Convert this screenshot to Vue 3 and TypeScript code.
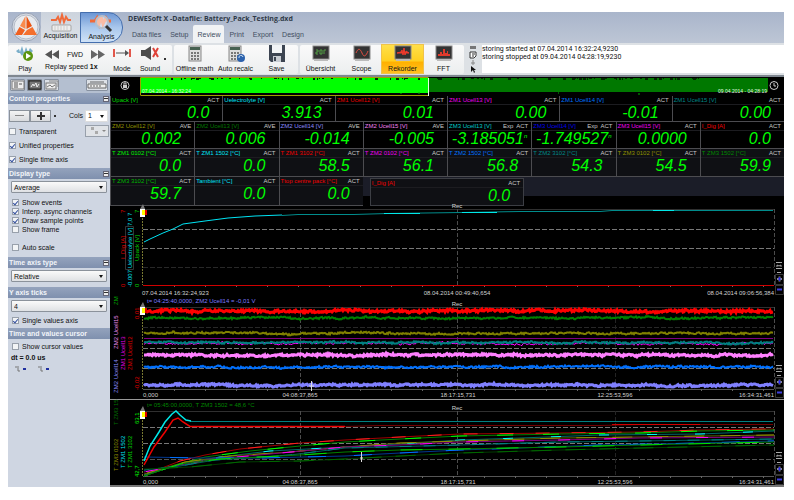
<script setup lang="ts">
import { ref } from 'vue'

interface Meter { name: string; unit: string; mode: string; value: string; color: string; exp?: string }

const m = (name: string, unit: string, mode: string, value: string, color: string, exp?: string): Meter =>
  ({ name, unit, mode, value, color, exp })

const rowA: Meter[] = [
  m('Upack', 'V', 'ACT', '0.0', '#00d800'),
  m('Uelectrolyte', 'V', 'ACT', '3.913', '#00e4f4'),
  m('ZM1 Ucell12', 'V', 'ACT', '0.01', '#e80000'),
  m('ZM1 Ucell13', 'V', 'ACT', '0.00', '#f000f0'),
  m('ZM1 Ucell14', 'V', 'ACT', '-0.01', '#0074ff'),
  m('ZM1 Ucell15', 'V', 'ACT', '0.00', '#008888'),
]
const rowB: Meter[] = [
  m('ZM2 Ucell12', 'V', 'AVE', '0.002', '#909000'),
  m('ZM2 Ucell13', 'V', 'AVE', '0.006', '#007800'),
  m('ZM2 Ucell14', 'V', 'AVE', '-0.014', '#8c8cff'),
  m('ZM2 Ucell15', 'V', 'AVE', '-0.005', '#f080f0'),
  m('ZM3 Ucell13', 'V', 'ACT', '-3.185051', '#00c8c8', 'n'),
  m('ZM3 Ucell14', 'V', 'ACT', '-1.749527', '#0000e8', 'n'),
  m('ZM3 Ucell15', 'V', 'ACT', '0.0000', '#f000f0'),
  m('I_Dig', 'A', 'ACT', '0.0', '#f00000'),
]
const rowC: Meter[] = [
  m('T ZM1 0102', '°C', 'ACT', '0.0', '#00f000'),
  m('T ZM1 1502', '°C', 'ACT', '0.0', '#00e4f4'),
  m('T ZM1 3102', '°C', 'ACT', '58.5', '#f00000'),
  m('T ZM2 0102', '°C', 'ACT', '56.1', '#f000f0'),
  m('T ZM2 1502', '°C', 'ACT', '56.8', '#0074ff'),
  m('T ZM2 3102', '°C', 'ACT', '54.3', '#008888'),
  m('T ZM3 0102', '°C', 'ACT', '54.5', '#909000'),
  m('T ZM3 1502', '°C', 'ACT', '59.9', '#008800'),
]
const rowD: Meter[] = [
  m('T ZM3 3102', '°C', 'ACT', '59.7', '#00b800'),
  m('Tambient', '°C', 'ACT', '0.0', '#00e4f4'),
  m('Ttop centre pack', '°C', 'ACT', '0.0', '#f00000'),
  m('I_Dig', 'A', 'ACT', '0.0', '#f00000'),
]
const rows = [
  { id: 'a', cells: rowA },
  { id: 'b', cells: rowB },
  { id: 'c', cells: rowC },
  { id: 'd', cells: rowD },
]

const menu = ['Data files', 'Setup', 'Review', 'Print', 'Export', 'Design']
const displays = ['Übersicht', 'Scope', 'Rekorder', 'FFT']

const options = ref([
  { label: 'Show events', on: true },
  { label: 'Interp. async channels', on: true },
  { label: 'Draw sample points', on: true },
  { label: 'Show frame', on: false },
])
const transparent = ref(false)
const unified = ref(true)
const singleTime = ref(true)
const autoScale = ref(false)
const singleValues = ref(true)
const cursorValues = ref(false)

function rng(seed: number) {
  let s = seed
  return () => {
    s = (s * 1103515245 + 12345) % 2147483648
    return s / 2147483648
  }
}

/* Noisy horizontal signal around y */
function noise(y: number, amp: number, seed: number): string {
  const r = rng(seed)
  let d = ''
  let drift = 0
  for (let x = 144; x <= 773; x++) {
    drift = drift * 0.92 + (r() - 0.5) * 0.7
    const v = y + drift + (r() - 0.5) * amp
    d += (d ? 'L' : 'M') + x + ' ' + v.toFixed(1)
  }
  return d
}

const traces = [
  { d: noise(311, 2.4, 11), c: '#ff0000', w: 3 },
  { d: noise(318, 1.6, 25), c: '#008000', w: 2 },
  { d: noise(333, 1.6, 37), c: '#808000', w: 2 },
  { d: noise(343.5, 2, 41), c: '#ff00ff', w: 1 },
  { d: noise(342.5, 1.6, 53), c: '#008080', w: 2 },
  { d: noise(355, 2, 67), c: '#ff80ff', w: 3 },
  { d: noise(367, 1.6, 71), c: '#0070ff', w: 2 },
  { d: noise(385, 1.8, 83), c: '#8080ff', w: 3 },
]

const temps = [
  { p: '144,475 180,461 205,455 240,449 300,443 345,440 400,437 460,434 560,433 640,432 700,430 774,429', c: '#a00000', h: '#ff2020', s: '14 22' },
  { p: '144,476 180,464 205,457 250,451 300,446 345,442 400,439 460,436 560,434 640,433 700,431 774,430', c: '#008000', h: '#00ff00', s: '16 30' },
  { p: '144,475 185,463 220,457 270,451 345,447 400,444 460,440 520,438 600,435 700,434 774,431', c: '#006868', h: '#00ffff', s: '10 38' },
  { p: '144,474 185,462 230,456 290,452 345,447 400,443 460,441 560,438 640,437 774,435', c: '#606000', h: '#909000', s: '20 16' },
  { p: '144,472 180,465 215,459 270,454 345,447 400,445 460,442 560,440 640,438 774,437', c: '#800080', h: '#ff00ff', s: '12 34' },
  { p: '144,470 180,466 215,460 290,455 345,448 460,445 560,442 640,441 774,439', c: '#006060', h: '#008080', s: '12 12' },
  { p: '144,457 200,458 260,458 345,456 400,453 460,450 520,448 600,445 700,443 774,441', c: '#003890', h: '#0070ff', s: '18 28' },
  { p: '144,476 180,464 220,459 300,455 345,452 400,450 460,449 560,447 640,445 774,442', c: '#008000', h: '#00e000', s: '22 26' },
  { p: '144,469 190,467 240,462 300,461 345,459 400,456 460,453 560,450 640,448 774,445', c: '#003c00', h: '#006800', s: '20 14' },
]

/* Dropouts of the signal along the overview strip */
const dropouts = (() => {
  const r = rng(7)
  const out: { x: number; y: number; w: number; h: number }[] = []
  for (let i = 0; i < 95; i++) out.push({ x: 165 + Math.floor(r() * 535), y: 78, w: 1 + Math.floor(r() * 3), h: 1 + Math.floor(r() * 2) })
  return out
})()

const recorders = [
  { id: 1, top: 206, height: 91, plotTop: 209, axis: 285, grid: [229, 248], faint: 267, ctl: 264 },
  { id: 2, top: 297, height: 103, plotTop: 307, axis: 389, grid: [348, 368], faint: 327, ctl: 367 },
  { id: 3, top: 400, height: 85, plotTop: 411, axis: 476, grid: [427, 443], faint: 459, ctl: 454 },
]
const ticks = Array.from({ length: 20 }, (_, i) => 174 + i * 31)

interface Tag { t: string; x: number; y: number; c: string }
const tags: Record<number, Tag[]> = {
  1: [
    { t: '0', x: 125, y: 287, c: '#e00000' }, { t: 'I_Dig [A]', x: 125, y: 259, c: '#e00000' }, { t: '7', x: 125, y: 213, c: '#e00000' },
    { t: '-0.007 Uelectrolyte [V] 7,0 7', x: 132, y: 287, c: '#00e4f4' },
    { t: '0', x: 139, y: 287, c: '#00d800' }, { t: 'Upack [V]', x: 139, y: 261, c: '#00d800' }, { t: '7', x: 139, y: 213, c: '#00d800' },
  ],
  2: [
    { t: 'ZM', x: 118, y: 305, c: '#00b000' }, { t: 'ZM2 Ucell15', x: 118, y: 349, c: '#f090f0' }, { t: 'ZM2 Ucell14', x: 118, y: 393, c: '#8c8cff' },
    { t: 'ZM1 Ucell13', x: 125, y: 370, c: '#e800e8' }, { t: 'ZM1 Ucell12', x: 132, y: 370, c: '#e00000' },
    { t: '0,01', x: 139, y: 319, c: '#e00000' }, { t: '-0,02', x: 139, y: 390, c: '#e00000' },
  ],
  3: [
    { t: 'T ZM3 15', x: 118, y: 425, c: '#007000' }, { t: 'T ZM3 0102', x: 118, y: 471, c: '#909000' },
    { t: 'T ZM1 1502', x: 125, y: 468, c: '#00e4f4' }, { t: 'T ZM1 3102', x: 132, y: 468, c: '#00d800' },
    { t: '63,1', x: 139, y: 424, c: '#00ff00' }, { t: '42,7', x: 139, y: 477, c: '#00ff00' },
  ],
}
</script>

<template>
  <div class="page">
    <div class="window">
      <header class="top">
        <svg class="logo" viewBox="0 0 30 30" width="30" height="30">
          <circle cx="15" cy="15" r="14" fill="#d5dae2" stroke="#98a2b4" />
          <circle cx="15" cy="15" r="12" fill="#e8ebef" stroke="#b5bcc8" />
          <path d="M14.500 4L9 14L14.500 17Z" fill="#f98a4c" /><path d="M15.500 4L21 14L15.500 17Z" fill="#e95413" />
          <path d="M8.500 15L14 18L11 23H4Z" fill="#ef6020" /><path d="M21.500 15L16 18L12 23H26Z" fill="#f4702e" />
        </svg>
        <nav class="modes">
          <button class="mode">
            <svg viewBox="0 0 40 20" width="40" height="20">
              <path d="M10 8H15L17 5L19 10L21 3L23 10L25 5L27 8H30" fill="none" stroke="#f06a3a" stroke-width="2" />
              <rect x="11" y="13" width="19" height="6" rx="1" fill="#eee" stroke="#a5a5a5" /><path d="M13 15H28M13 17H28" stroke="#ccc" stroke-dasharray="2 1" />
            </svg>
            <span>Acquisition</span>
          </button>
          <button class="mode active">
            <svg viewBox="0 0 40 20" width="40" height="20">
              <path d="M8 8H13L15 5L17 11L19 3L21 11L24 5L26 8H29" fill="none" stroke="#f06a3a" stroke-width="3" />
              <circle cx="20" cy="9" r="6" fill="#fff" fill-opacity=".55" stroke="#b6bfcc" stroke-width="2" /><path d="M24 13L29 18" stroke="#333" stroke-width="3" />
            </svg>
            <span>Analysis</span>
          </button>
        </nav>
        <div class="titles">
          <h1>DEWESoft X -Datafile: Battery_Pack_Testing.dxd</h1>
          <nav class="menu">
            <a v-for="t in menu" :key="t" href="#" :class="{ current: t === 'Review' }">{{ t }}</a>
          </nav>
        </div>
      </header>

      <section class="ribbon">
        <div class="group">
          <button class="tool narrow">
            <svg viewBox="0 0 20 17" width="20" height="17">
              <path d="M1 6L4 4L5 7L7 1L9 8L11 2L13 7L15 3L18 6L15 9L13 8L11 11L9 8L7 11L5 8L3 8Z" fill="#7aaec9" />
              <circle cx="13" cy="11" r="5" fill="#5b9410" /><path d="M11 8L16 11L11 14Z" fill="#fff" />
            </svg><span>Play</span>
          </button>
          <div class="replay">
            <div class="speed">
              <button aria-label="Slower"><svg viewBox="0 0 14 9" width="14" height="9"><path d="M7 0V9L0 4.500ZM14 0V9L7 4.500Z" fill="#555" /></svg></button>
              <span>FWD</span>
              <button aria-label="Faster"><svg viewBox="0 0 14 9" width="14" height="9"><path d="M0 0V9L7 4.500ZM7 0V9L14 4.500Z" fill="#666" /></svg></button>
            </div>
            <span>Replay speed <b>1x</b></span>
          </div>
          <button class="tool small">
            <svg viewBox="0 0 18 17" width="18" height="17"><path d="M1 4V12M17 4V12" stroke="#e2574b" stroke-width="2" /><path d="M3 8H14" stroke="#555" /><path d="M12 5L16 8L12 11Z" fill="#555" /></svg>
            <span>Mode</span>
          </button>
          <button class="tool small">
            <svg viewBox="0 0 20 17" width="20" height="17"><path d="M1 5H5L11 1V15L5 11H1Z" fill="#4d4d4d" /><path d="M13 3L18 12M18 3L13 12" stroke="#e0433a" stroke-width="2" /></svg>
            <span>Sound</span>
          </button>
          <i class="more"></i>
        </div>
        <div class="group">
          <button class="tool">
            <svg viewBox="0 0 20 17" width="20" height="17"><rect x="4" y="1" width="12" height="15" fill="#ddd" stroke="#888" /><rect x="5" y="2" width="10" height="3" fill="#476151" /><path d="M6 8H15M6 11H15M6 14H15" stroke="#777" stroke-width="2" stroke-dasharray="2 1" /></svg>
            <span>Offline math</span>
          </button>
          <button class="tool">
            <svg viewBox="0 0 20 17" width="20" height="17"><rect x="3" y="1" width="12" height="15" fill="#ddd" stroke="#888" /><rect x="4" y="2" width="10" height="3" fill="#476151" /><path d="M5 8H14M5 11H14M5 14H14" stroke="#777" stroke-width="2" stroke-dasharray="2 1" /><circle cx="15" cy="13" r="4" fill="#2c62ad" /><path d="M13 13A2 2 0 0 1 17 12" fill="none" stroke="#cde" /></svg>
            <span>Auto recalc</span>
          </button>
          <button class="tool">
            <svg viewBox="0 0 20 17" width="20" height="17"><path d="M2 0H18V17H4L2 15Z" fill="#3d4552" /><rect x="5" y="0" width="10" height="8" fill="#f2f4f6" /><rect x="6" y="11" width="8" height="6" fill="#c8cdd3" /><rect x="7" y="12" width="2" height="4" fill="#3d4552" /></svg>
            <span>Save</span>
          </button>
        </div>
        <div class="group">
          <button v-for="(d, i) in displays" :key="d" class="tool" :class="{ selected: d === 'Rekorder' }">
            <svg viewBox="0 0 20 17" width="20" height="17">
              <rect x="2" y="1" width="16" height="13" fill="#333" stroke="#888" /><path d="M3 15H17" stroke="#bbb" stroke-width="2" />
              <path v-if="i === 0" d="M5 5H7V7H5V9H7M9 5H11V9H9ZM13 9V5H15" fill="none" stroke="#53a045" />
              <path v-if="i === 1" d="M4 8C6 3 8 3 10 8S14 11 16 6" fill="none" stroke="#df4c40" />
              <path v-if="i === 2" d="M4 8L8 7L9 5L10 10L11 3L12 10L13 6L16 8Z" fill="#f03a2c" stroke="#f03a2c" />
              <path v-if="i === 3" d="M4 11V9H6V7H8V9H9V4H11V8H13V6H14V9H16V11Z" fill="#df3a2c" />
            </svg>
            <span>{{ d }}</span>
          </button>
        </div>
        <div class="minis">
          <svg viewBox="0 0 8 28" width="8" height="28"><path d="M1 1H7V4H1Z" fill="#777" /><path d="M1 7H7V11L5 13H1Z M3 9H6M3 11H5" fill="#fff" stroke="#333" /><path d="M4 15V20M2 18H6" stroke="#888" /><path d="M2 21V27L4 25L5 28L6 27L5 25H7Z" fill="#111" /></svg>
        </div>
        <div class="log">
          <p>storing started at 07.04.2014 16:32:24,9230</p>
          <p>storing stopped at 09.04.2014 04:28:19,9230</p>
        </div>
      </section>

      <div class="body">
        <aside class="side">
          <div class="views">
            <button aria-label="List view"><svg viewBox="0 0 14 10" width="14" height="10"><rect x="1" y="1" width="12" height="8" fill="#eee" stroke="#777" /><path d="M3 3H5M3 5H5M3 7H5M6 2V8M8 4H11" stroke="#555" /></svg></button>
            <button class="dark" aria-label="Recorder view"><svg viewBox="0 0 14 10" width="14" height="10"><rect x="1" y="1" width="12" height="8" fill="#777" stroke="#222" /><path d="M3 7L5 4L6 6L8 3L9 7L11 4" fill="none" stroke="#eee" /></svg></button>
            <button aria-label="Stack view"><svg viewBox="0 0 14 10" width="14" height="10"><path d="M4 1H13V7" fill="none" stroke="#888" /><rect x="1" y="3" width="10" height="6" fill="#eee" stroke="#777" /><path d="M2 7L5 5L7 7L10 5" fill="none" stroke="#777" /></svg></button>
            <button class="wide" aria-label="Device"><svg viewBox="0 0 20 10" width="20" height="10"><path d="M1 4H19V8H1ZM3 2H17" fill="#eee" stroke="#666" /><path d="M3 6H14" stroke="#666" stroke-dasharray="2 1" /></svg></button>
          </div>
          <h2>Control properties<i></i></h2>
          <div class="panel props">
            <div class="line">
              <div class="pair"><button aria-label="Remove column" class="minus"></button><button aria-label="Add column" class="plus"></button></div>
              <b class="dot"></b>
              <label for="cols">Cols</label>
              <span class="drop cols"><select id="cols"><option>1</option><option>2</option></select></span>
            </div>
            <div class="line">
              <label><input v-model="transparent" type="checkbox">Transparent</label>
              <button class="fill" aria-label="Fill"><svg viewBox="0 0 22 10" width="22" height="10"><path d="M5 1H8V4H5ZM9 5H12V8H9Z" fill="#aaa" /><path d="M16 4H20L18 6Z" fill="#888" /></svg></button>
            </div>
            <label class="line"><input v-model="unified" type="checkbox">Unified properties</label>
            <label class="line"><input v-model="singleTime" type="checkbox">Single time axis</label>
          </div>
          <h2>Display type<i></i></h2>
          <div class="panel display">
            <span class="drop"><select aria-label="Display type"><option>Average</option></select></span>
            <div class="checks">
              <label v-for="o in options" :key="o.label"><input v-model="o.on" type="checkbox">{{ o.label }}</label>
            </div>
            <label><input v-model="autoScale" type="checkbox">Auto scale</label>
          </div>
          <h2>Time axis type<i></i></h2>
          <div class="panel axis">
            <span class="drop"><select aria-label="Time axis type"><option>Relative</option></select></span>
          </div>
          <h2>Y axis ticks<i></i></h2>
          <div class="panel yaxis">
            <span class="drop"><select aria-label="Y axis ticks"><option>4</option></select></span>
            <label><input v-model="singleValues" type="checkbox">Single values axis</label>
          </div>
          <h2>Time and values cursor</h2>
          <div class="panel cursor">
            <label><input v-model="cursorValues" type="checkbox">Show cursor values</label>
            <strong>dt = 0.0 us</strong>
            <svg viewBox="0 0 40 8" width="40" height="8"><path d="M4 2H8M7 3V6H9M27 2H31M30 3V6H32" fill="none" stroke="#777" /><path d="M12 4H15M35 4H38" stroke="#2030a0" stroke-width="2" /></svg>
          </div>
        </aside>

        <main class="main">
          <svg class="chart" viewBox="110 77 674 19">
            <rect x="110" y="77" width="674" height="19" fill="#000" />
            <circle cx="125" cy="85.500" r="4" fill="none" stroke="#ccc" /><rect x="123" y="85" width="4" height="3" fill="#ccc" /><path d="M124 85V83H126V85" fill="none" stroke="#ccc" />
            <rect x="141" y="78" width="288" height="15" fill="#00ff00" />
            <rect x="429" y="78" width="339" height="14" fill="#007800" />
            <rect v-for="(n, i) in dropouts" :key="i" :x="n.x" :y="n.y" :width="n.w" :height="n.h" fill="#002800" />
            <path d="M401 93V94M419 92V94M558 93H559M639 93V95" stroke="#00b000" />
            <path d="M140.500 77.500H428.500M140.500 95.500H428.500M140.500 77.500V95" stroke="#a0a000" fill="none" />
            <path d="M428.500 78V96" stroke="#e8ffe8" />
            <text x="142" y="93" class="stamp">07.04.2014 - 16:32:24</text>
            <text x="767" y="93" class="stamp" text-anchor="end">09.04.2014 - 04:28:19</text>
            <circle cx="774" cy="85.500" r="4" fill="none" stroke="#ccc" /><path d="M774 83V86H776" fill="none" stroke="#ccc" />
          </svg>

          <div v-for="r in rows" :key="r.id" class="meters" :class="'row-' + r.id">
            <div v-for="(c, i) in r.cells" :key="i" class="meter">
              <div class="cap">
                <span class="name" :style="{ color: c.color }">{{ c.name }} [{{ c.unit }}]</span>
                <span v-if="c.exp">Exp</span>
                <span>{{ c.mode }}</span>
              </div>
              <output :class="{ long: c.exp }">{{ c.value }}<sup v-if="c.exp">{{ c.exp }}</sup></output>
            </div>
          </div>

          <svg v-for="r in recorders" :key="r.id" class="chart" :viewBox="`110 ${r.top} 674 ${r.height}`">
            <rect x="110" :y="r.top" width="674" :height="r.height" fill="#000" />
            <path :d="`M143 ${r.plotTop + 0.5}H774`" stroke="#303030" />
            <path v-for="g in r.grid" :key="g" :d="`M143 ${g + 0.5}H774`" stroke="#787878" stroke-dasharray="5 2" />
            <path :d="`M143 ${r.faint + 0.5}H774`" :stroke="r.id === 3 ? '#555' : '#282828'" stroke-dasharray="5 2" />
            <path :d="`M457.500 ${r.plotTop}V${r.axis}M774.500 ${r.plotTop}V${r.axis}`" stroke="#4c4c4c" stroke-dasharray="4 2" />
            <path v-if="r.id > 1" :d="`M300.500 ${r.plotTop}V${r.axis}`" stroke="#4c4c4c" stroke-dasharray="4 2" />
            <path v-if="r.id > 1" :d="`M615.500 ${r.plotTop}V${r.axis}`" stroke="#242424" stroke-dasharray="4 2" />
            <path :d="`M143 ${r.axis + 0.5}H774`" stroke="#555" />
            <path v-for="t in ticks" :key="t" :d="`M${t}.500 ${r.axis}v2`" stroke="#666" />

            <template v-if="r.id === 1">
              <path d="M144 242L150 239L163 233L173 229L183 224L205 221L228 218L255 216L282 215" fill="none" stroke="#00e4f4" />
              <path d="M282 215.500L298 214.500H354L387 213.500L462 212.500L520 211.500H600L612 210.500H773" fill="none" stroke="#008c8c" />
              <path d="M384 213.500H420M462 212.500H497M653 210.500H674" stroke="#00e8e8" />
              <path d="M143 285.500H774" stroke="#d00000" />
              <path d="M125.500 226.500H133.500V269.500H125.500Z" fill="none" stroke="#333" />
              <text x="142" y="295" class="axis-text">07.04.2014 16:32:24,923</text>
              <text x="457" y="295" class="axis-text" text-anchor="middle">08.04.2014 00:49:40,654</text>
              <text x="774" y="295" class="axis-text" text-anchor="end">08.04.2014 09:06:56,384</text>
            </template>

            <template v-if="r.id === 2">
              <path d="M144 338.500H773" stroke="#800080" />
              <path v-for="(t, i) in traces" :key="i" :d="t.d" fill="none" :stroke="t.c" :stroke-width="t.w" />
              <path d="M311.500 381V391M309 386H314" stroke="#ddd" />
              <text x="147" y="303" class="axis-text" fill="#7c7cff">t= 04:25:40,0000, ZM2 Ucell14 = -0,01 V</text>
              <path d="M110 399.500H784" stroke="#999" />
            </template>

            <template v-if="r.id === 3">
              <path d="M190 421.500H773" stroke="#008080" />
              <path d="M345 426.500L380 425.500H600L640 424.500H773" fill="none" stroke="#700000" />
              <path d="M612 424.500H700" stroke="#d00000" />
              <g v-for="(t, i) in temps" :key="i" fill="none">
                <polyline :points="t.p" :stroke="t.c" /><polyline :points="t.p" :stroke="t.h" :stroke-dasharray="t.s" :stroke-dashoffset="i * 11" />
              </g>
              <path d="M144 465L154 447L165 432L173 420L178 418L183 422L190 426.500H345" fill="none" stroke="#f00000" stroke-width="1.500" />
              <path d="M144 461L150 446L159 432L165 422L172 414L176 411L180 415L186 420L191 421" fill="none" stroke="#00e8e8" stroke-width="1.500" />
              <path d="M361.500 452V462M360 458H363" stroke="#ddd" />
              <text x="147" y="407" class="axis-text" fill="#008400">t= 05:45:00,0000, T ZM3 1502 = 48,6 °C</text>
            </template>

            <template v-if="r.id > 1">
              <text x="143" :y="r.axis + 8" class="axis-text">0,000</text>
              <text x="300" :y="r.axis + 8" class="axis-text" text-anchor="middle">04:08:37,865</text>
              <text x="458" :y="r.axis + 8" class="axis-text" text-anchor="middle">18:17:15,731</text>
              <text x="615" :y="r.axis + 8" class="axis-text" text-anchor="middle">12:25:53,596</text>
              <text x="774" :y="r.axis + 8" class="axis-text" text-anchor="end">16:34:31,461</text>
            </template>
            <text x="457" :y="r.id === 1 ? 208 : r.plotTop - 1" class="axis-text" text-anchor="middle">Rec</text>

            <path :d="`M142.500 ${r.plotTop}V${r.axis}`" stroke="#787830" stroke-dasharray="2 1" />
            <path :d="`M140 ${r.plotTop}L143 ${r.plotTop - 5}L145 ${r.plotTop}Z`" fill="#777" />
            <rect x="140" :y="r.plotTop" width="5" height="8" fill="#fff" /><rect x="142" :y="r.plotTop + 1" width="3" height="5" fill="#ff0" /><rect x="145" :y="r.plotTop + 1" width="2" height="5" fill="#e00000" />

            <text v-for="(t, i) in tags[r.id]" :key="i" :transform="`translate(${t.x} ${t.y}) rotate(-90)`" :fill="t.c" class="axis-text">{{ t.t }}</text>

            <g :transform="`translate(775 ${r.ctl})`">
              <path d="M1 -1.500H7M1 4.500H7M2 8.500H6" stroke="#aaa" /><path d="M2 3V1L4 2L6 1V3" fill="none" stroke="#aaa" />
              <path d="M.5 10.500H8.500V20.500H.5ZM.5 21.500H8.500V30.500H.5Z" fill="#000" stroke="#383838" />
              <path d="M4.500 12.500V17.500M2 15H7" stroke="#889" stroke-width="2" /><path d="M4.500 13V17M3 15H6" stroke="#2828e8" />
              <path d="M2 25.500H7" stroke="#4040e0" stroke-width="2" />
            </g>
          </svg>
          <div class="foot"></div>
        </main>
      </div>
    </div>
  </div>
</template>

<style>
body { background: #fff; }
</style>

<style scoped>
* { box-sizing: border-box; }
.page {
  padding: 12px 10px 13px 8px;
  font: 7px/9px "Liberation Sans", Arial, sans-serif;
  color: #111;
}
button, select, input { font: inherit; color: inherit; margin: 0; }
button { border: 0; padding: 0; background: none; }
a { color: inherit; text-decoration: none; }
p, h1, h2 { margin: 0; }
svg { display: block; flex: none; }

.top { display: flex; height: 31px; background: linear-gradient(#a9b5cb, #bdc6d5); }
.logo { margin-left: 3px; }
.modes { display: flex; }
.mode {
  width: 39px; display: flex; flex-direction: column; align-items: center;
  background: linear-gradient(#ccd3dd, #dee2e8); white-space: nowrap;
}
.mode.active {
  width: 43px; border: 1px solid #456fae; border-radius: 0 15px 15px 0;
  background: linear-gradient(#6c96d4, #a9c7ec 50%, #cfe2f7);
}
.mode svg { height: 20px; }
.mode span { line-height: 8px; }
.titles { padding-left: 5px; display: flex; flex-direction: column; }
h1 { font: bold 7px/13px "Open Sans", "Liberation Sans", sans-serif; color: #303a48; white-space: nowrap; }
.menu { display: flex; flex: 1; color: #414d60; gap: 1px; }
.menu a { padding: 5px 4px 0; line-height: 9px; white-space: nowrap; }
.menu a.current { background: #f1f3f5; border-radius: 2px 2px 0 0; }

.ribbon { display: flex; height: 34px; background: #dde1e5; padding: 2px 0; border-bottom: 2px solid #7f8790; gap: 2px; }
.group { display: flex; background: linear-gradient(#fafafa, #eceeef); border-radius: 2px; white-space: nowrap; height: 29px; }
.group:first-child { width: 164px; }
.group:nth-child(2) { width: 124px; }
.tool { width: 41px; display: flex; flex-direction: column; align-items: center; gap: 2px; height: 28px; }
.tool span { line-height: 9px; }
.tool.narrow { width: 34px; }
.tool.small { width: 28px; }
.tool.selected { background: linear-gradient(#ffe04a, #ffcf20 58%, #ffb000 60%, #ffc020); outline: 1px solid #efc24a; }
.replay { width: 66px; display: flex; flex-direction: column; gap: 2px; padding: 3px 3px 0; }
.speed { display: flex; justify-content: space-between; align-items: center; height: 12px; }
.more { width: 2px; height: 2px; margin-top: 13px; background: #333; }
.minis { width: 14px; display: flex; justify-content: center; }
.log { flex: 1; background: #fff; font-family: Roboto, "Liberation Sans", sans-serif; line-height: 8px; height: 28px; }

.body { display: flex; }
.side { width: 102px; flex: none; background: #cfd6e2; }
.views { display: flex; gap: 2px; height: 16px; padding: 2px; background: #b4bfd0; }
.views button { border: 1px solid #8791a0; border-radius: 1px; background: #dde1e7; width: 15px; height: 12px; display: flex; justify-content: center; }
.views .dark { background: #555; }
.views .wide { width: 22px; margin-left: auto; }
h2 {
  display: flex; justify-content: space-between; align-items: center; height: 11px; padding: 0 1px;
  font-size: 7px; line-height: 11px; color: #f1f4f9; background: linear-gradient(#94a3bd, #7f90ae); white-space: nowrap;
}
h2 i { width: 6px; height: 6px; background: linear-gradient(#333, #333) center / 4px 1px no-repeat #eee; border: 1px solid #667; }
.panel { display: flex; flex-direction: column; padding: 2px 3px; }
label { display: flex; align-items: center; white-space: nowrap; }
input[type="checkbox"] {
  appearance: none; width: 7px; height: 7px; margin-right: 3px; border: 1px solid #98a0ab;
  background: #f2f4f6; display: flex; justify-content: center; flex: none;
}
input[type="checkbox"]:checked::after { content: ""; width: 2px; height: 4px; border: solid #3450a0; border-width: 0 1px 1px 0; transform: rotate(40deg); }
.drop { display: flex; position: relative; }
.drop::after { content: ""; position: absolute; right: 4px; top: 5px; border: solid transparent; border-width: 3px 2px 0; border-top-color: #111; pointer-events: none; }
select { appearance: none; width: 100%; height: 12px; padding: 0 2px; border: 1px solid #8b929b; border-radius: 1px; background: linear-gradient(#fafafa, #dfe1e4); }
.props { height: 64px; padding: 4px 1px 0; }
.props .line { display: flex; align-items: center; height: 14px; }
.props .line:first-child { height: 15px; margin-bottom: 1px; }
.pair { display: flex; }
.pair button { width: 21px; height: 12px; border: 1px solid #8b929b; background: linear-gradient(#888, #888) center / 9px 1px no-repeat, linear-gradient(#f4f4f4, #d8dadd); }
.pair .plus { background: linear-gradient(#333, #333) center / 8px 2px no-repeat, linear-gradient(#333, #333) center / 2px 8px no-repeat, linear-gradient(#f4f4f4, #d8dadd); }
.dot { width: 2px; height: 2px; background: #333; margin: 0 13px 0 3px; }
.cols { width: 23px; margin-left: auto; margin-right: 1px; }
.cols select { background: #fff; border-color: #ddd; }
.fill { margin-left: auto; border: 1px solid #98a0ab; background: #e0e3e7; height: 12px; width: 24px; }
.display { height: 78px; }
.display .checks { padding: 5px 1px 9px; }
.display > label, .yaxis label, .cursor label { padding-left: 1px; }
.display label { height: 9px; }
.axis { height: 19px; }
.yaxis { height: 30px; gap: 4px; }
.cursor { padding-top: 3px; gap: 2px; min-height: 148px; }
.cursor strong { font-size: 7px; line-height: 10px; }

.main { flex: 1; min-width: 0; background: #000; }
.chart { width: 100%; height: auto; overflow: visible; }
.stamp { font-size: 5px; fill: #e0ffe0; }
.axis-text { font-size: 6px; }
.axis-text:not([fill]) { fill: #d0d0d0; }
.meters { display: grid; grid-template-columns: repeat(8, 1fr); height: 28px; background: #1b1d28; }
.row-a { grid-template-columns: repeat(6, 1fr); height: 26px; }
.row-b { height: 27px; }
.row-a .meter, .row-b .meter { background: #000; }
.row-d { height: 29px; background: linear-gradient(#1b1d28 65%, #000 65%); }
.row-d .meter:nth-child(4) { grid-column: 4 / 6; margin: 1px 7px 0; border: 1px solid #3c3e44; }
.meter { background: #0f1014; border: solid #4c4c50; border-width: 0 0 1px 1px; min-width: 0; }
.cap { display: flex; gap: 3px; height: 9px; padding: 0 3px 0 1px; border-bottom: 1px solid #1c1c20; font-size: 6px; line-height: 8px; color: #c8c8c8; white-space: nowrap; }
.name { flex: 1; }
output { display: block; text-align: right; padding-right: 13px; font-size: 16px; line-height: 16px; font-style: italic; color: #00ff00; white-space: nowrap; }
output.long { padding-right: 4px; }
sup { font-size: 6px; line-height: 0; vertical-align: 6px; }
.foot { height: 2px; background: #777; }
</style>
